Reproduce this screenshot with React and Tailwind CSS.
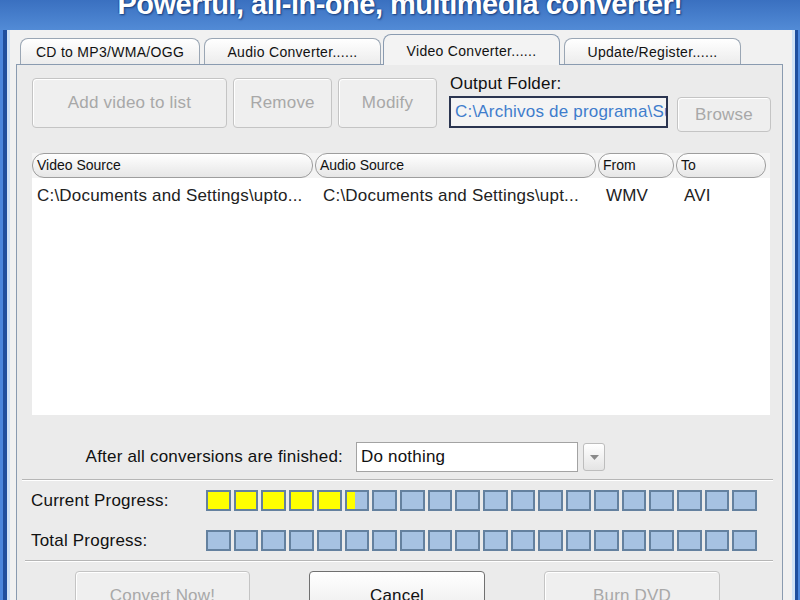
import React from 'react';

const Btn = ({ children, className = '', disabled = true }) => (
  <div
    className={`flex shrink-0 items-center justify-center rounded-[4px] border text-[17px] tracking-[0.2px] ${
      disabled
        ? 'border-[#c4c4c4] bg-[#efefef] text-[#a8a8a8] shadow-[inset_1px_1px_0_#ffffff]'
        : 'border-[#707070] bg-gradient-to-b from-white to-[#e9e9e9] text-[#111]'
    } ${className}`}
  >
    {children}
  </div>
);

const Tab = ({ label, className = '', active = false }) => (
  <div
    className={
      active
        ? `relative z-10 -mb-[1px] flex h-[31px] items-start justify-center rounded-t-[8px] border border-b-0 border-[#8a9bb0] bg-[#f3f3f3] pt-[6px] text-[14px] tracking-[0.3px] text-[#111] ${className}`
        : `flex h-[26px] items-start justify-center rounded-t-[8px] border border-b-0 border-[#9aa6b4] bg-gradient-to-b from-white to-[#ececec] pt-[3px] text-[14px] tracking-[0.3px] text-[#111] ${className}`
    }
  >
    {label}
  </div>
);

const HeadCell = ({ children, className = '' }) => (
  <div
    className={`flex h-[25px] items-center rounded-[12px] border border-[#9d9d9d] bg-gradient-to-b from-white to-[#e6e6e6] pl-[4px] text-[14px] text-[#111] ${className}`}
  >
    {children}
  </div>
);

// 20 blocks, filled = whole yellow blocks, partial = 40% of the next one
const Progress = ({ filled = 0, partial = false }) => (
  <div className="grid w-[551px] grid-cols-20 gap-[3px]">
    {Array.from({ length: 20 }).map((_, i) => (
      <div
        key={i}
        className={`relative h-[21px] border-2 border-[#64819f] ${
          i < filled ? 'bg-[#ffff00]' : 'bg-[#a6c2e2]'
        }`}
      >
        {partial && i === filled && (
          <div className="absolute inset-y-0 left-0 w-[40%] bg-[#ffff00]" />
        )}
      </div>
    ))}
  </div>
);

const App = () => {
  return (
    <div className="flex h-[600px] w-[800px] flex-col overflow-hidden bg-[#efefef] font-['Liberation_Sans',sans-serif]">
      {/* Title banner */}
      <div className="flex h-[30px] shrink-0 justify-center overflow-hidden bg-gradient-to-b from-[#3a70c0] to-[#528bd6]">
        <div className="-mt-[10px] whitespace-nowrap text-[29px] font-bold leading-none tracking-[-0.5px] text-white [text-shadow:1px_1px_2px_#163a78,-1px_-1px_1px_#2a5aa8]">
          Powerful, all-in-one, multimedia converter!
        </div>
      </div>

      <div className="flex flex-1">
        {/* left window frame */}
        <div className="flex w-[10px] shrink-0">
          <div className="w-[3px] bg-[#4a86dc]" />
          <div className="w-[4px] bg-[#1f4f9e]" />
          <div className="w-[3px] bg-[#cfe2f6]" />
        </div>

        <div className="flex w-[782px] flex-col bg-[#f1f1f1] pt-[4px]">
          {/* tabs */}
          <div className="flex h-[30px] items-end pl-[10px]">
            <Tab className="w-[180px]" label="CD to MP3/WMA/OGG" />
            <Tab className="ml-[4px] w-[177px]" label="Audio Converter......" />
            <Tab className="ml-[2px] w-[177px]" label="Video Converter......" active />
            <Tab className="ml-[4px] w-[177px]" label="Update/Register......" />
          </div>

          <div className="ml-[6px] flex w-[767px] flex-1 flex-col border border-b-0 border-[#8a9bb0] bg-[#ebebeb] text-[17px] tracking-[0.2px]">
            {/* top buttons */}
            <div className="mt-[13px] flex h-[54px] pl-[15px]">
              <Btn className="h-[50px] w-[195px]">Add video to list</Btn>
              <Btn className="ml-[6px] h-[50px] w-[99px]">Remove</Btn>
              <Btn className="ml-[6px] h-[50px] w-[99px]">Modify</Btn>
              <div className="-mt-[4px] ml-[12px] flex flex-col">
                <div className="pl-[1px] leading-[20px] text-[#111]">Output Folder:</div>
                <div className="mt-[2px] flex items-start">
                  <div className="h-[32px] w-[219px] overflow-hidden whitespace-nowrap border-2 border-[#2b3550] bg-[#f4f4f4] pl-[4px] leading-[27px] text-[#3f7dcc]">
                    C:\Archivos de programa\Super
                  </div>
                  <Btn className="ml-[9px] mt-[1px] h-[35px] w-[94px]">Browse</Btn>
                </div>
              </div>
            </div>

            {/* file list */}
            <div className="ml-[15px] mt-[21px] h-[262px] w-[738px] bg-white">
              <div className="flex h-[25px] bg-[#f4f4f4] tracking-normal">
                <HeadCell className="w-[281px]">Video Source</HeadCell>
                <HeadCell className="ml-[2px] w-[281px]">Audio Source</HeadCell>
                <HeadCell className="ml-[2px] w-[76px]">From</HeadCell>
                <HeadCell className="ml-[2px] w-[90px]">To</HeadCell>
              </div>
              <div className="mt-[8px] flex h-[20px] whitespace-nowrap leading-[20px] text-[#222]">
                <div className="w-[283px] pl-[5px]">C:\Documents and Settings\upto...</div>
                <div className="w-[283px] pl-[8px]">C:\Documents and Settings\upt...</div>
                <div className="w-[78px] pl-[8px]">WMV</div>
                <div className="pl-[8px]">AVI</div>
              </div>
            </div>

            {/* after conversions */}
            <div className="mt-[27px] flex h-[30px] items-center pl-[15px]">
              <div className="w-[311px] text-right text-[#111]">After all conversions are finished:</div>
              <div className="ml-[13px] flex h-[30px] w-[222px] items-center border border-[#a3a3a3] bg-white pl-[4px] text-[#111]">
                Do nothing
              </div>
              <div className="ml-[5px] flex h-[28px] w-[22px] items-center justify-center rounded-[3px] border border-[#bdbdbd] bg-gradient-to-b from-white to-[#e4e4e4]">
                <svg width="9" height="5" viewBox="0 0 9 5">
                  <path d="M0 0h9L4.5 5z" fill="#8a8a8a" />
                </svg>
              </div>
            </div>

            <div className="ml-[5px] mt-[7px] h-0 w-[751px] border-t border-[#b6b6b6] shadow-[0_1px_0_#ffffff]" />

            {/* progress */}
            <div className="mt-[10px] flex h-[21px] items-center pl-[14px]">
              <div className="w-[175px] text-[#111]">Current Progress:</div>
              <Progress filled={5} partial />
            </div>
            <div className="mt-[19px] flex h-[21px] items-center pl-[14px]">
              <div className="w-[175px] text-[#111]">Total Progress:</div>
              <Progress />
            </div>

            <div className="ml-[8px] mt-[9px] h-0 w-[748px] border-t border-[#b6b6b6] shadow-[0_1px_0_#ffffff]" />

            {/* bottom buttons */}
            <div className="mt-[10px] flex pl-[58px]">
              <Btn className="h-[50px] w-[175px]">Convert Now!</Btn>
              <Btn className="ml-[59px] h-[50px] w-[176px]" disabled={false}>Cancel</Btn>
              <Btn className="ml-[59px] h-[50px] w-[176px]">Burn DVD</Btn>
            </div>
          </div>
        </div>

        {/* right window frame */}
        <div className="flex w-[8px] shrink-0">
          <div className="w-[3px] bg-[#cfe2f6]" />
          <div className="w-[3px] bg-[#1f4f9e]" />
          <div className="w-[2px] bg-[#4a86dc]" />
        </div>
      </div>
    </div>
  );
};

export default App;
